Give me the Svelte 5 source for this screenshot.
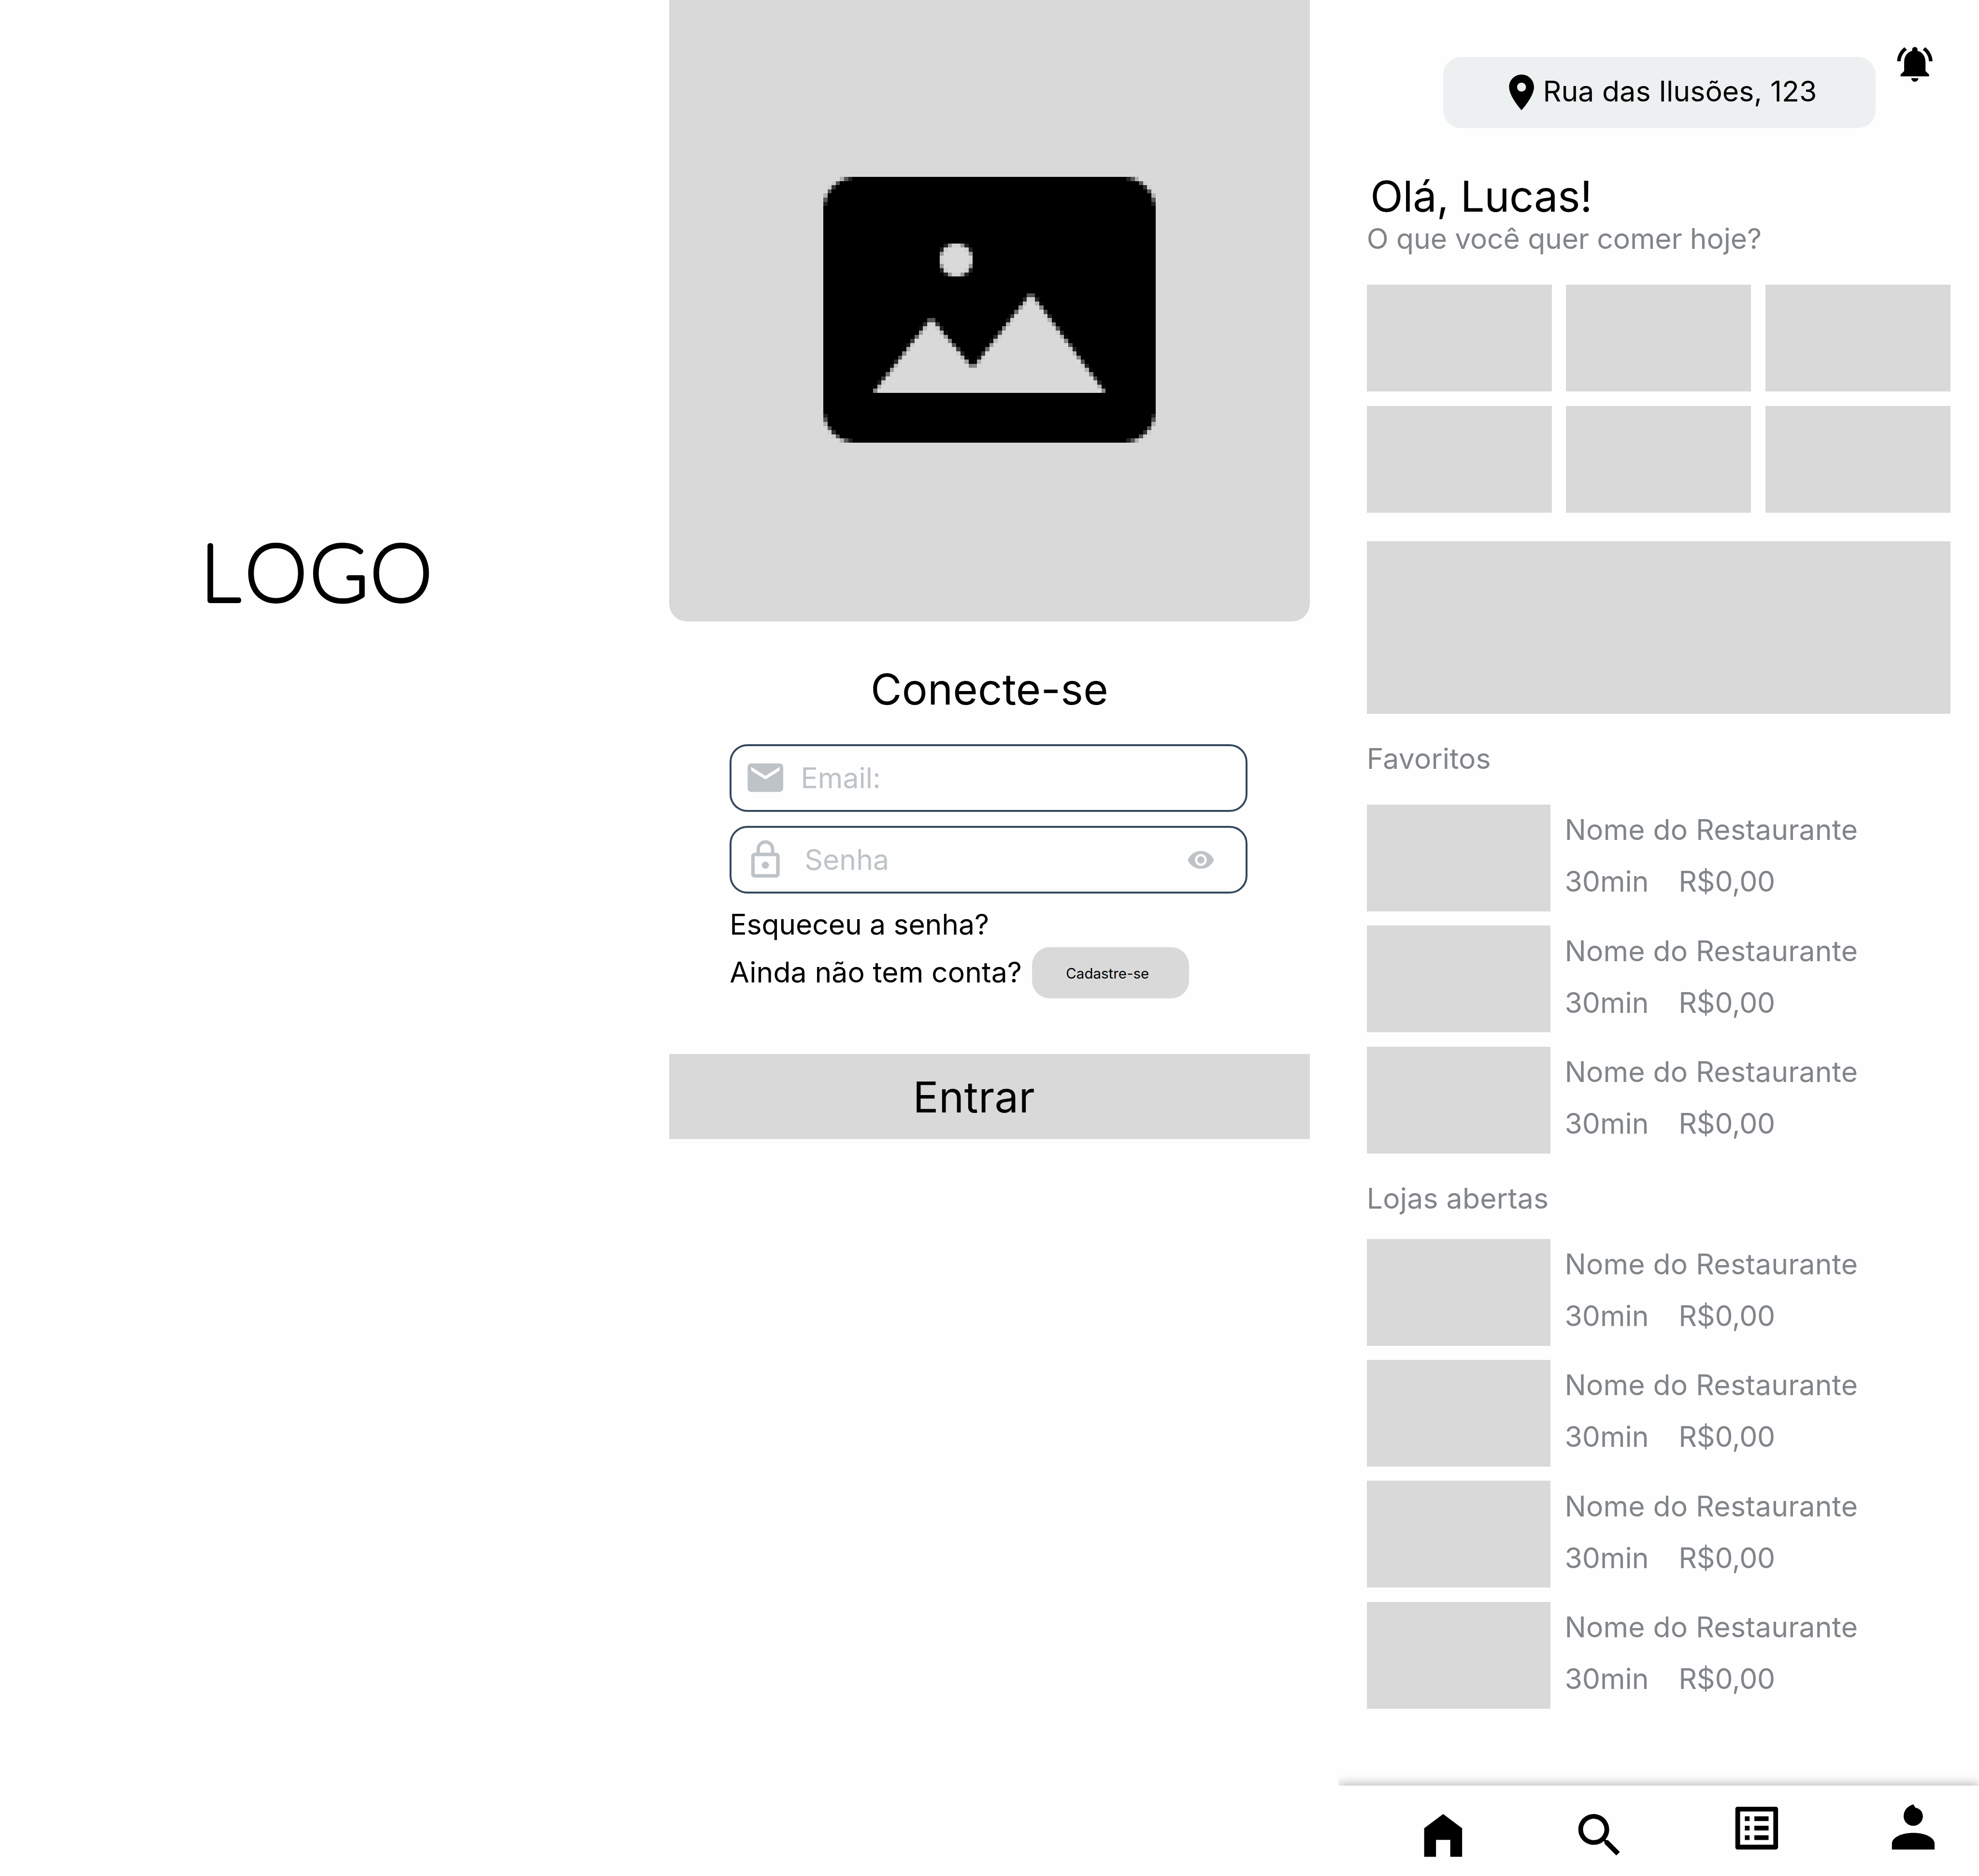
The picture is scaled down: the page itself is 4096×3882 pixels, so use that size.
<script>
  const favourites = [1, 2, 3];
  const openShops = [1, 2, 3, 4];
  const tiles = [1, 2, 3, 4, 5, 6];

  // Placeholder picture: an 80x64 bitmap, drawn one cell at a time.
  const COLS = 80;
  const ROWS = 64;
  const SAMPLES = 8;

  function insideFrame(x, y) {
    const r = 8;
    const dx = Math.max(r - x, x - (COLS - r), 0);
    const dy = Math.max(r - y, y - (ROWS - r), 0);
    return dx * dx + dy * dy <= r * r;
  }

  function insideCutout(x, y) {
    if ((x - 32) ** 2 + (y - 20) ** 2 <= 16) return true;
    if (y > 52) return false;
    const first = 34 + Math.max(((26 - x) * 18) / 14, ((x - 26) * 12) / 10);
    const second = 28 + Math.max(((50 - x) * 18) / 14, ((x - 50) * 24) / 18);
    return y >= Math.min(first, second);
  }

  function coverage(cx, cy) {
    let hits = 0;
    for (let i = 0; i < SAMPLES; i++) {
      for (let j = 0; j < SAMPLES; j++) {
        const x = cx + (i + 0.5) / SAMPLES;
        const y = cy + (j + 0.5) / SAMPLES;
        if (insideFrame(x, y) && !insideCutout(x, y)) hits++;
      }
    }
    return hits / (SAMPLES * SAMPLES);
  }

  function buildRuns() {
    const runs = [];
    for (let y = 0; y < ROWS; y++) {
      let run = null;
      for (let x = 0; x < COLS; x++) {
        const a = coverage(x, y);
        if (run && run.a === a) {
          run.w++;
        } else {
          run = { x, y, w: 1, a };
          runs.push(run);
        }
      }
    }
    return runs.filter((r) => r.a > 0);
  }

  const runs = buildRuns();
  const shade = (a) => {
    const v = Math.round(217 * (1 - a));
    return `rgb(${v},${v},${v})`;
  };
</script>

{#snippet restaurant()}
  <li class="shop">
    <div class="thumb"></div>
    <div class="info">
      <p class="name">Nome do Restaurante</p>
      <div class="meta"><span class="time">30min</span><span class="fee">R$0,00</span></div>
    </div>
  </li>
{/snippet}

<main class="board">
  <section class="frame splash">
    <svg class="logo" viewBox="0 0 360 60">
      <text y="47.6" x="112.8 137.8 174.2 208.2">LOGO</text>
    </svg>
  </section>

  <section class="frame login">
    <div class="hero">
      <svg class="picture" viewBox="0 0 80 64" shape-rendering="crispEdges">
        {#each runs as r}
          <rect x={r.x} y={r.y} width={r.w} height="1" fill={shade(r.a)} />
        {/each}
      </svg>
    </div>
    <h1>Conecte-se</h1>
    <div class="fields">
      <div class="field">
        <svg class="icon" viewBox="0 0 24 24"><path d="M20 4H4c-1.1 0-1.99.9-1.99 2L2 18c0 1.1.9 2 2 2h16c1.1 0 2-.9 2-2V6c0-1.1-.9-2-2-2zm0 4l-8 5-8-5V6l8 5 8-5v2z" /></svg>
        <span class="email">Email:</span>
      </div>
      <div class="field">
        <svg class="icon" viewBox="0 0 24 24"><path d="M12 17c1.1 0 2-.9 2-2s-.9-2-2-2-2 .9-2 2 .9 2 2 2zm6-9h-1V6c0-2.76-2.24-5-5-5S7 3.24 7 6v2H6c-1.1 0-2 .9-2 2v10c0 1.1.9 2 2 2h12c1.1 0 2-.9 2-2V10c0-1.1-.9-2-2-2zM8.9 6c0-1.71 1.39-3.1 3.1-3.1s3.1 1.39 3.1 3.1v2H8.9V6zM18 20H6V10h12v10z" /></svg>
        <span class="password">Senha</span>
        <svg class="eye" viewBox="0 0 24 24"><path d="M12 4.5C7 4.5 2.73 7.61 1 12c1.73 4.39 6 7.5 11 7.5s9.27-3.11 11-7.5c-1.73-4.39-6-7.5-11-7.5zM12 17c-2.76 0-5-2.24-5-5s2.24-5 5-5 5 2.24 5 5-2.24 5-5 5zm0-8c-1.66 0-3 1.34-3 3s1.34 3 3 3 3-1.34 3-3-1.34-3-3-3z" /></svg>
      </div>
    </div>
    <p class="forgot">Esqueceu a senha?</p>
    <div class="signup">
      <span>Ainda não tem conta?</span>
      <button class="register">Cadastre-se</button>
    </div>
    <button class="enter">Entrar</button>
  </section>

  <section class="frame home">
    <header>
      <div class="address">
        <svg class="icon" viewBox="0 0 24 24"><path d="M12 2C8.13 2 5 5.13 5 9c0 5.25 7 13 7 13s7-7.75 7-13c0-3.87-3.13-7-7-7zm0 9.5c-1.38 0-2.5-1.12-2.5-2.5s1.12-2.5 2.5-2.5 2.5 1.12 2.5 2.5-1.12 2.5-2.5 2.5z" /></svg>
        <span>Rua das Ilusões, 123</span>
      </div>
      <svg class="icon bell" viewBox="0 0 24 24"><path d="M7.58 4.08L6.15 2.65C3.75 4.48 2.17 7.3 2.03 10.5h2c.15-2.65 1.51-4.97 3.55-6.42zm12.39 6.42h2c-.15-3.2-1.73-6.02-4.12-7.85l-1.42 1.43c2.02 1.45 3.39 3.77 3.54 6.42zM18 11c0-3.07-1.64-5.64-4.5-6.32V4c0-.83-.67-1.5-1.5-1.5s-1.5.67-1.5 1.5v.68C7.63 5.36 6 7.92 6 11v5l-2 2v1h16v-1l-2-2v-5zm-6 11c.14 0 .27-.01.4-.04.65-.14 1.18-.58 1.44-1.18.1-.24.15-.5.15-.78h-4c.01 1.1.9 2 2.01 2z" /></svg>
    </header>
    <div class="content">
      <h1>Olá, Lucas!</h1>
      <p class="question">O que você quer comer hoje?</p>
      <div class="tiles">
        {#each tiles as t (t)}<div class="tile"></div>{/each}
      </div>
      <div class="banner"></div>
      <h2>Favoritos</h2>
      <ul>
        {#each favourites as f (f)}{@render restaurant()}{/each}
      </ul>
      <h2>Lojas abertas</h2>
      <ul class="open">
        {#each openShops as s (s)}{@render restaurant()}{/each}
      </ul>
    </div>
    <nav>
      <svg class="tab" viewBox="0 0 24 24"><path d="M4 21V9l8-6 8 6v12h-5v-7.1H9V21z" /></svg>
      <svg class="tab" viewBox="0 0 24 24"><path d="M15.5 14h-.79l-.28-.27C15.41 12.59 16 11.11 16 9.5 16 5.91 13.09 3 9.5 3S3 5.91 3 9.5 5.91 16 9.5 16c1.61 0 3.09-.59 4.23-1.57l.27.28v.79l5 4.99L20.49 19l-4.99-5zm-6 0C7.01 14 5 11.99 5 9.5S7.01 5 9.5 5 14 7.01 14 9.5 11.99 14 9.5 14z" /></svg>
      <svg class="tab list" viewBox="0 0 24 24"><path d="M19 5v14H5V5h14m1.1-2H3.9c-.5 0-.9.4-.9.9v16.2c0 .4.4.9.9.9h16.2c.4 0 .9-.5.9-.9V3.9c0-.5-.5-.9-.9-.9zM11 7h6v2h-6V7zm0 4h6v2h-6v-2zm0 4h6v2h-6zM7 7h2v2H7zm0 4h2v2H7zm0 4h2v2H7z" /></svg>
      <svg class="tab person" viewBox="0 0 24 24"><path d="M12 10c2.25 0 4.05-1.8 4.05-4.05 0-1.85-1.35-3.25-3.1-3.55L12 .95C9.7 1.55 7.95 3.5 7.95 5.95 7.95 8.2 9.75 10 12 10zM12 13c-5.1 0-9 2.05-9 4.5V20h18v-2.5c0-2.45-3.9-4.5-9-4.5z" /></svg>
    </nav>
  </section>
</main>

<style>
  /* One rem is one layout unit; the board is 1112 x 1054 units. */
  :global(html) { font-size: 3.68345px; }
  :global(body) { margin: 0; background: #fefefe; overflow: hidden; }

  .board {
    display: flex;
    gap: 16rem;
    width: 1112rem;
    height: 100vh;
    overflow: hidden;
    font-family: Inter, "Liberation Sans", sans-serif;
    font-size: 16rem;
    line-height: 20rem;
    color: #000;
    background: #fefefe;
  }
  .frame {
    width: 360rem;
    height: 1054rem;
    flex: none;
    overflow: hidden;
    display: flex;
    flex-direction: column;
  }
  h1, h2, p, ul { margin: 0; padding: 0; font-weight: 400; list-style: none; }
  h1 { font-size: 24rem; line-height: 30rem; }
  h2 { font-size: 16rem; line-height: 20rem; }
  svg { display: block; flex: none; fill: currentColor; }
  button {
    border: 0;
    padding: 0;
    background: #d9d9d9;
    font: inherit;
    color: inherit;
    text-align: left;
  }
  .icon { width: 24rem; height: 24rem; }

  .splash { padding-top: 290rem; box-sizing: border-box; }
  .logo { width: 360rem; height: 60rem; }
  .logo text {
    font-family: Lato, sans-serif;
    font-weight: 100;
    font-size: 44.1px;
    stroke: #000;
    stroke-width: 2.65px;
    stroke-linejoin: round;
    stroke-linecap: round;
  }

  .hero {
    height: 349rem;
    flex: none;
    background: #d9d9d9;
    border-radius: 0 0 10rem 10rem;
    display: flex;
    justify-content: center;
    align-items: flex-start;
  }
  .picture { width: 186.667rem; height: 149.333rem; margin-top: 99.3rem; }
  .login h1 { margin-top: 23.2rem; text-align: center; letter-spacing: 0.04rem; }
  .fields {
    display: flex;
    flex-direction: column;
    gap: 8rem;
    margin: 15.8rem 0 0 34rem;
    width: 291rem;
    color: #bdc3c7;
  }
  .field {
    box-sizing: border-box;
    height: 38rem;
    border: 4px solid #34495e;
    border-radius: 10rem;
    display: flex;
    align-items: center;
    padding: 0 17.1rem 0 6.9rem;
  }
  .email { margin-left: 8rem; }
  .password { margin-left: 10.1rem; }
  .eye { width: 16rem; height: 16rem; margin-left: auto; }
  .forgot { margin: 7.2rem 0 0 34rem; letter-spacing: -0.04rem; }
  .signup { display: flex; align-items: center; margin: 2.8rem 0 0 34rem; width: 291rem; }
  .signup span { padding-bottom: 0.5rem; letter-spacing: 0.02rem; }
  .register {
    margin-left: auto;
    margin-right: 33rem;
    width: 88rem;
    height: 29rem;
    box-sizing: border-box;
    padding: 0.9rem 0 0 19rem;
    border-radius: 10rem;
    font-size: 8rem;
    line-height: 10rem;
  }
  .enter {
    height: 48rem;
    margin-top: 31rem;
    padding: 0.5rem 0 0 137rem;
    font-size: 24rem;
    line-height: 30rem;
    letter-spacing: 0.1rem;
  }

  header { display: flex; align-items: flex-start; padding: 24rem 0 0 59rem; }
  .address {
    display: flex;
    align-items: center;
    box-sizing: border-box;
    width: 243rem;
    height: 40rem;
    margin-top: 8rem;
    padding-left: 32rem;
    border-radius: 10rem;
    background: #ecf0f1;
  }
  .address span { padding-bottom: 1.4rem; letter-spacing: 0.015rem; }
  .bell { margin-left: 10rem; }
  .content { padding: 23.3rem 16rem 0; color: #818589; }
  .home h1 { margin-left: 2rem; color: #000; letter-spacing: -0.13rem; }
  .question { margin-top: -1.1rem; letter-spacing: -0.05rem; }
  .tiles {
    display: grid;
    grid-template-columns: repeat(3, 1fr);
    grid-auto-rows: 60rem;
    gap: 8rem;
    margin-top: 15.8rem;
  }
  .tile, .banner, .thumb { background: #d9d9d9; }
  .banner { height: 97rem; margin-top: 16rem; }
  h2 { margin-top: 15.2rem; letter-spacing: 0.05rem; }
  ul { display: flex; flex-direction: column; gap: 8rem; margin-top: 15.8rem; }
  .open { margin-top: 12.8rem; }
  .shop { display: flex; gap: 8rem; height: 60rem; }
  .thumb { width: 103.2rem; }
  .info { display: flex; flex-direction: column; gap: 9rem; padding-top: 4.2rem; }
  .name { letter-spacing: 0.05rem; }
  .meta { display: flex; }
  .time { width: 64rem; }
  .fee { letter-spacing: -0.06rem; }

  nav {
    display: flex;
    align-items: flex-start;
    gap: 56rem;
    box-sizing: border-box;
    height: 51rem;
    margin-top: auto;
    padding: 8rem 0 0 43rem;
    background: #fefefe;
    box-shadow: 0 -1.25rem 5rem rgba(0, 0, 0, 0.25);
  }
  .tab { width: 32rem; height: 32rem; margin-top: 4rem; }
  .list { margin-top: 0; }
  .person { margin-top: 1.3rem; }
</style>
